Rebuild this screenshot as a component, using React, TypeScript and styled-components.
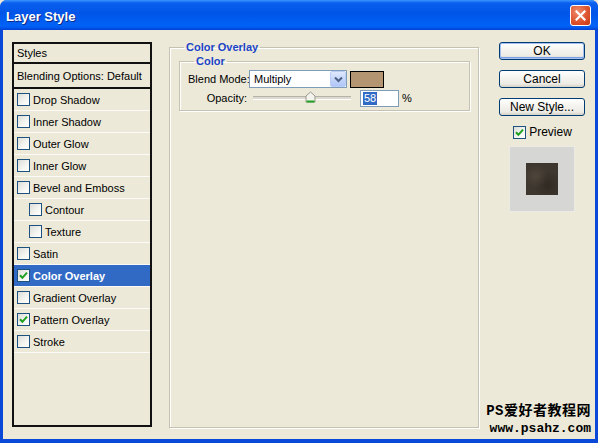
import React from "react"
import styled, { createGlobalStyle } from "styled-components"

const GlobalStyle = createGlobalStyle`
  html, body {
    margin: 0;
    padding: 0;
    background: #ece9d8;
  }
  body {
    font-family: "Liberation Sans", Arial, sans-serif;
    font-size: 11px;
    color: #000;
  }
`

const effects: { label: string; checked?: boolean; sub?: boolean; selected?: boolean }[] = [
  { label: "Drop Shadow" },
  { label: "Inner Shadow" },
  { label: "Outer Glow" },
  { label: "Inner Glow" },
  { label: "Bevel and Emboss" },
  { label: "Contour", sub: true },
  { label: "Texture", sub: true },
  { label: "Satin" },
  { label: "Color Overlay", checked: true, selected: true },
  { label: "Gradient Overlay" },
  { label: "Pattern Overlay", checked: true },
  { label: "Stroke" },
]

const CheckMark = () => (
  <svg width="9" height="9" viewBox="0 0 9 9">
    <path d="M1 4.2 L3.4 6.8 L8 1.6" fill="none" stroke="#21a121" strokeWidth="2" />
  </svg>
)

const ChevronDown = () => (
  <svg width="9" height="7" viewBox="0 0 9 7">
    <path d="M1 1.5 L4.5 5 L8 1.5" fill="none" stroke="#4d6185" strokeWidth="2" />
  </svg>
)

const CloseX = () => (
  <svg width="11" height="11" viewBox="0 0 11 11">
    <path d="M1.5 1.5 L9.5 9.5 M9.5 1.5 L1.5 9.5" stroke="#fff" strokeWidth="2.2" strokeLinecap="square" />
  </svg>
)

const SliderThumb = () => (
  <svg width="11" height="12" viewBox="0 0 11 12">
    <path d="M1 11 L1 5 L5.5 1 L10 5 L10 11 Z" fill="#f4f3ee" stroke="#9a998c" />
    <path d="M1.5 10.5 L9.5 10.5" stroke="#21a121" strokeWidth="2" />
  </svg>
)

const App: React.FC = () => {
  return (
    <>
      <GlobalStyle />
      <Window>
        <TitleBar>
          <Title>Layer Style</Title>
          <CloseButton>
            <CloseX />
          </CloseButton>
        </TitleBar>
        <Body>
          <StyleList>
            <HeaderRow $tall={false}>Styles</HeaderRow>
            <HeaderRow $tall>Blending Options: Default</HeaderRow>
            {effects.map((e) => (
              <EffectRow key={e.label} $selected={!!e.selected} $sub={!!e.sub}>
                <CheckBox>{e.checked && <CheckMark />}</CheckBox>
                {e.label}
              </EffectRow>
            ))}
          </StyleList>

          <OuterGroup>
            <Legend $offset={14}>Color Overlay</Legend>
            <InnerGroup>
              <Legend $offset={6}>Color</Legend>
              <FormGrid>
                <Label>Blend Mode:</Label>
                <ControlRow>
                  <Select>
                    <SelectText>Multiply</SelectText>
                    <SelectArrow>
                      <ChevronDown />
                    </SelectArrow>
                  </Select>
                  <Swatch />
                </ControlRow>
                <Label>Opacity:</Label>
                <ControlRow>
                  <Slider>
                    <Track />
                    <Thumb style={{ left: `${58 * 0.92}%` }}>
                      <SliderThumb />
                    </Thumb>
                  </Slider>
                  <NumberBox>
                    <Highlight>58</Highlight>
                  </NumberBox>
                  <Percent>%</Percent>
                </ControlRow>
              </FormGrid>
            </InnerGroup>
          </OuterGroup>

          <Actions>
            <Button $default>OK</Button>
            <Button>Cancel</Button>
            <Button>New Style...</Button>
            <PreviewToggle>
              <CheckBox>
                <CheckMark />
              </CheckBox>
              Preview
            </PreviewToggle>
            <PreviewBox>
              <PreviewSwatch />
            </PreviewBox>
          </Actions>

          <Watermark>
            <WatermarkTitle>PS爱好者教程网</WatermarkTitle>
            <WatermarkUrl>www.psahz.com</WatermarkUrl>
          </Watermark>
        </Body>
      </Window>
    </>
  )
}

const Window = styled.div`
  width: 598px;
  height: 443px;
  display: flex;
  flex-direction: column;
  background: #0a48d8;
  border-radius: 7px 7px 0 0;
  overflow: hidden;
`

const TitleBar = styled.div`
  height: 30px;
  flex-shrink: 0;
  display: flex;
  align-items: center;
  justify-content: space-between;
  padding: 0 7px 0 6px;
  box-sizing: border-box;
  background: linear-gradient(
    to bottom,
    #3d95ff 0%,
    #0a5fef 10%,
    #0055e8 45%,
    #0062f7 85%,
    #0058ee 92%,
    #0040d0 100%
  );
`

const Title = styled.div`
  color: #fff;
  font-weight: bold;
  font-size: 13px;
  text-shadow: 1px 1px 0 #0a2a8a;
  padding-top: 2px;
`

const CloseButton = styled.div`
  width: 21px;
  height: 21px;
  box-sizing: border-box;
  border: 1px solid #fff;
  border-radius: 3px;
  display: flex;
  align-items: center;
  justify-content: center;
  margin-top: 1px;
  background: radial-gradient(circle at 35% 30%, #f08b6c 0%, #dd5530 55%, #c4380f 100%);
`

const Body = styled.div`
  position: relative;
  flex: 1;
  margin: 0 3px 4px 3px;
  background: #ece9d8;
  display: flex;
  align-items: flex-start;
  padding: 12px 0 0 9px;
`

const StyleList = styled.div`
  width: 140px;
  height: 385px;
  box-sizing: border-box;
  border: 2px solid #111;
  display: flex;
  flex-direction: column;
  flex-shrink: 0;
`

const HeaderRow = styled.div<{ $tall: boolean }>`
  height: ${(p) => (p.$tall ? 23 : 18)}px;
  border-bottom: 2px solid #111;
  display: flex;
  align-items: center;
  padding-left: 3px;
`

const EffectRow = styled.div<{ $selected: boolean; $sub: boolean }>`
  height: 21px;
  border-bottom: 1px solid #fbfaf6;
  display: flex;
  align-items: center;
  gap: 3px;
  padding-left: ${(p) => (p.$sub ? 15 : 3)}px;
  background: ${(p) => (p.$selected ? "#316ac5" : "transparent")};
  color: ${(p) => (p.$selected ? "#fff" : "#000")};
  font-weight: ${(p) => (p.$selected ? "bold" : "normal")};
`

const CheckBox = styled.span`
  width: 13px;
  height: 13px;
  box-sizing: border-box;
  border: 1px solid #1c5180;
  background: linear-gradient(135deg, #dcdcd7 0%, #f5f5f2 60%, #ffffff 100%);
  display: inline-flex;
  align-items: center;
  justify-content: center;
  flex-shrink: 0;
`

const OuterGroup = styled.fieldset`
  margin: -1px 0 0 17px;
  padding: 0;
  width: 310px;
  height: 387px;
  box-sizing: border-box;
  border: 1px solid #c5c2b2;
  box-shadow: 1px 1px 0 #fff, inset 1px 1px 0 #fff;
  flex-shrink: 0;
  min-width: 0;
`

const Legend = styled.legend<{ $offset: number }>`
  margin-left: ${(p) => p.$offset}px;
  padding: 0 2px;
  font-weight: bold;
  font-size: 11px;
  line-height: 12px;
  color: #1b44c6;
`

const InnerGroup = styled.fieldset`
  margin: 2px 0 0 9px;
  padding: 3px 8px 3px 8px;
  width: 291px;
  box-sizing: border-box;
  border: 1px solid #c5c2b2;
  box-shadow: 1px 1px 0 #fff, inset 1px 1px 0 #fff;
  min-width: 0;
`

const FormGrid = styled.div`
  display: grid;
  grid-template-columns: 59px auto;
  column-gap: 2px;
  row-gap: 1px;
  align-items: center;
`

const Label = styled.div`
  text-align: right;
  white-space: nowrap;
`

const ControlRow = styled.div`
  display: flex;
  align-items: center;
  height: 18px;
`

const Select = styled.div`
  width: 98px;
  height: 18px;
  box-sizing: border-box;
  border: 1px solid #7f9db9;
  background: #fff;
  display: flex;
  align-items: center;
  justify-content: space-between;
`

const SelectText = styled.span`
  padding-left: 4px;
`

const SelectArrow = styled.span`
  width: 16px;
  height: 16px;
  box-sizing: border-box;
  border: 1px solid #b9cdf5;
  border-radius: 2px;
  background: linear-gradient(to bottom, #dfe8fd 0%, #c1d3fb 60%, #b1c6f7 100%);
  display: flex;
  align-items: center;
  justify-content: center;
`

const Swatch = styled.div`
  width: 34px;
  height: 17px;
  margin-left: 3px;
  box-sizing: border-box;
  border: 1px solid #000;
  background: #b49572;
`

const Slider = styled.div`
  position: relative;
  width: 98px;
  height: 16px;
  margin-left: 4px;
  display: flex;
  align-items: center;
`

const Track = styled.div`
  width: 100%;
  height: 2px;
  border-top: 1px solid #b5b3a8;
  border-bottom: 1px solid #fff;
  background: #dcdad0;
`

const Thumb = styled.span`
  position: absolute;
  top: 1px;
  display: flex;
`

const NumberBox = styled.div`
  width: 39px;
  height: 17px;
  margin-left: 9px;
  box-sizing: border-box;
  border: 1px solid #7f9db9;
  background: #fff;
  display: flex;
  align-items: center;
  padding-left: 2px;
`

const Highlight = styled.span`
  background: #316ac5;
  color: #fff;
  padding: 0 1px;
  line-height: 13px;
`

const Percent = styled.span`
  margin-left: 3px;
`

const Actions = styled.div`
  width: 86px;
  margin-left: 20px;
  display: flex;
  flex-direction: column;
  align-items: center;
  flex-shrink: 0;
`

const Button = styled.div<{ $default?: boolean }>`
  width: 86px;
  height: 18px;
  box-sizing: border-box;
  margin-bottom: 10px;
  border: 1px solid #003c74;
  border-radius: 3px;
  background: linear-gradient(to bottom, #ffffff 0%, #f4f3ee 45%, #ecebe4 80%, #d6d0c5 100%);
  box-shadow: ${(p) =>
    p.$default ? "inset 0 0 0 1px #a4c0ef, inset 0 -1px 0 1px #7aa0e6" : "none"};
  display: flex;
  align-items: center;
  justify-content: center;
  font-size: 12px;
`

const PreviewToggle = styled.div`
  display: flex;
  align-items: center;
  gap: 3px;
  height: 14px;
  font-size: 12px;
  margin-top: -1px;
  margin-left: 1px;
`

const PreviewBox = styled.div`
  width: 66px;
  height: 66px;
  margin-top: 7px;
  box-sizing: border-box;
  border: 1px solid #eceae4;
  background: #d6d6d4;
  display: flex;
  align-items: center;
  justify-content: center;
`

const PreviewSwatch = styled.div`
  width: 32px;
  height: 32px;
  background:
    radial-gradient(circle at 30% 40%, rgba(90, 80, 66, 0.6) 0%, transparent 40%),
    radial-gradient(circle at 70% 70%, rgba(40, 34, 28, 0.6) 0%, transparent 45%),
    #3e372f;
`

const Watermark = styled.div`
  position: absolute;
  right: 4px;
  bottom: 2px;
  display: flex;
  flex-direction: column;
  align-items: flex-end;
  line-height: 17px;
`

const WatermarkTitle = styled.div`
  font-family: "Liberation Mono", "Noto Sans CJK SC", monospace;
  font-weight: bold;
  font-size: 14px;
  letter-spacing: 0.5px;
`

const WatermarkUrl = styled.div`
  font-family: "Liberation Mono", monospace;
  font-weight: bold;
  font-size: 13px;
`

export default App
